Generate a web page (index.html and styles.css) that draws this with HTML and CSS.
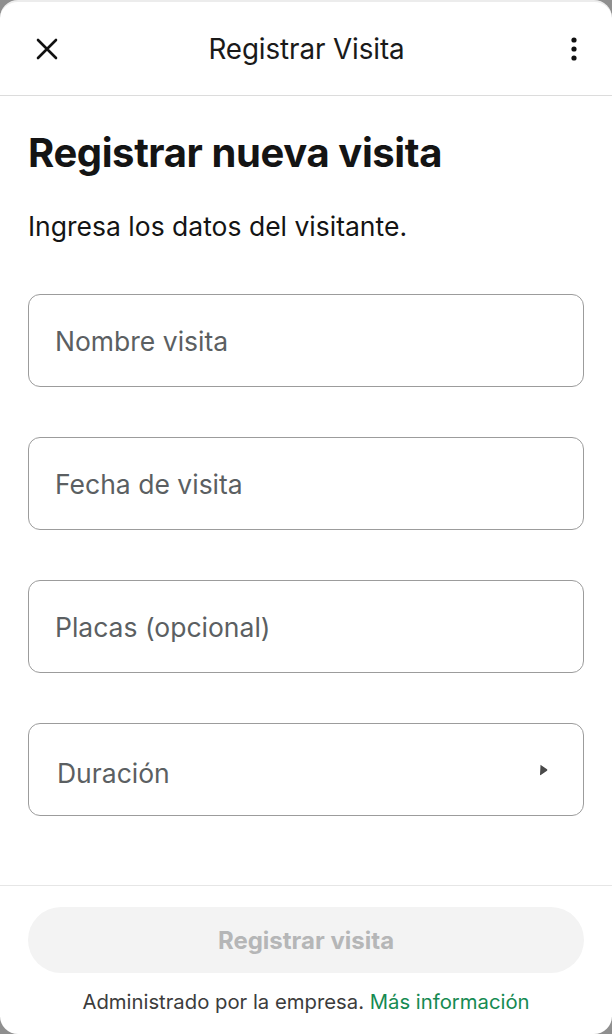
FILE: index.html
```html
<!DOCTYPE html>
<html lang="es">
<head>
    <meta charset="UTF-8">
    <meta name="viewport" content="width=device-width, initial-scale=1.0">
    <title>Registrar Visita</title>
    <link rel="stylesheet" href="styles.css">
</head>
<body>
    <div class="sheet">
        <header class="topbar">
            <button class="icon-btn" aria-label="Cerrar">
                <svg width="24" height="24" viewBox="0 0 24 24"><path d="M3 3 L21 21 M21 3 L3 21" stroke="#111" stroke-width="2.6" stroke-linecap="round" fill="none"/></svg>
            </button>
            <div class="topbar-title">Registrar Visita</div>
            <button class="icon-btn icon-end" aria-label="Más opciones">
                <svg width="24" height="24" viewBox="0 0 24 24"><circle cx="12" cy="3" r="2.6" fill="#111"/><circle cx="12" cy="12" r="2.6" fill="#111"/><circle cx="12" cy="21" r="2.6" fill="#111"/></svg>
            </button>
        </header>

        <main class="content">
            <h1>Registrar nueva visita</h1>
            <p class="lead">Ingresa los datos del visitante.</p>

            <div class="fields">
                <div class="field">Nombre visita</div>
                <div class="field">Fecha de visita</div>
                <div class="field">Placas (opcional)</div>
                <div class="field field-select">
                    <span>Duración</span>
                    <svg width="9" height="12" viewBox="0 0 9 12"><path d="M1.5 1.2 Q1 0.6 1.8 0.9 L8 5.3 Q8.8 6 8 6.7 L1.8 11.1 Q1 11.4 1 10.6 Z" fill="#4a4a4a"/></svg>
                </div>
            </div>
        </main>

        <footer class="bottom">
            <button class="submit" disabled>Registrar visita</button>
            <p class="managed">Administrado por la empresa. <a href="#">Más información</a></p>
        </footer>
    </div>
</body>
</html>
```

FILE: styles.css
```css
html, body { margin: 0; height: 100%; }
body { background: #8f8f8f; font-family: Inter, "Noto Sans", sans-serif; color: #141414; }
.sheet { background: #fff; height: 1034px; border-radius: 18px; display: flex; flex-direction: column; overflow: hidden; border-top: 2px solid #ececec; box-sizing: border-box; }
.topbar { height: 93px; display: grid; grid-template-columns: 1fr auto 1fr; align-items: center; padding: 0 24px 0 33px; border-bottom: 1.5px solid #dcdcdc; flex-shrink: 0; }
.icon-btn { background: none; border: 0; padding: 0; width: 28px; height: 28px; display: flex; align-items: center; justify-content: center; }
.icon-end { justify-self: end; }
.topbar-title { font-size: 27.8px; color: #1a1a1a; letter-spacing: -0.1px; margin-left: -8px; }
.content { padding: 0 28px; flex: 1; }
h1 { font-size: 40px; font-weight: 700; margin: 33px 0 0; letter-spacing: -0.4px; line-height: 48px; }
.lead { font-size: 26.5px; margin: 33px 0 0; line-height: 32px; }
.fields { display: flex; flex-direction: column; gap: 50px; margin-top: 52px; }
.field { height: 93px; box-sizing: border-box; border: 1.5px solid #9c9c9c; border-radius: 12px; padding: 0 26px; display: flex; align-items: center; font-size: 26.5px; color: #5b5f62; }
.field-select { justify-content: space-between; padding: 7px 35px 0 28px; }
.field-select svg { margin-top: -6px; }
.bottom { border-top: 1.5px solid #e6e6e6; padding: 21px 28px 20px; display: flex; flex-direction: column; align-items: center; }
.submit { width: 100%; height: 66px; border: 0; border-radius: 33px; background: #f3f3f3; color: #b5b6b7; font-family: Inter, sans-serif; font-size: 24px; font-weight: 700; }
.managed { margin: 17px 0 0; font-size: 20.3px; line-height: 24px; color: #3c3c3c; }
.managed a { color: #168a52; text-decoration: none; }
```
